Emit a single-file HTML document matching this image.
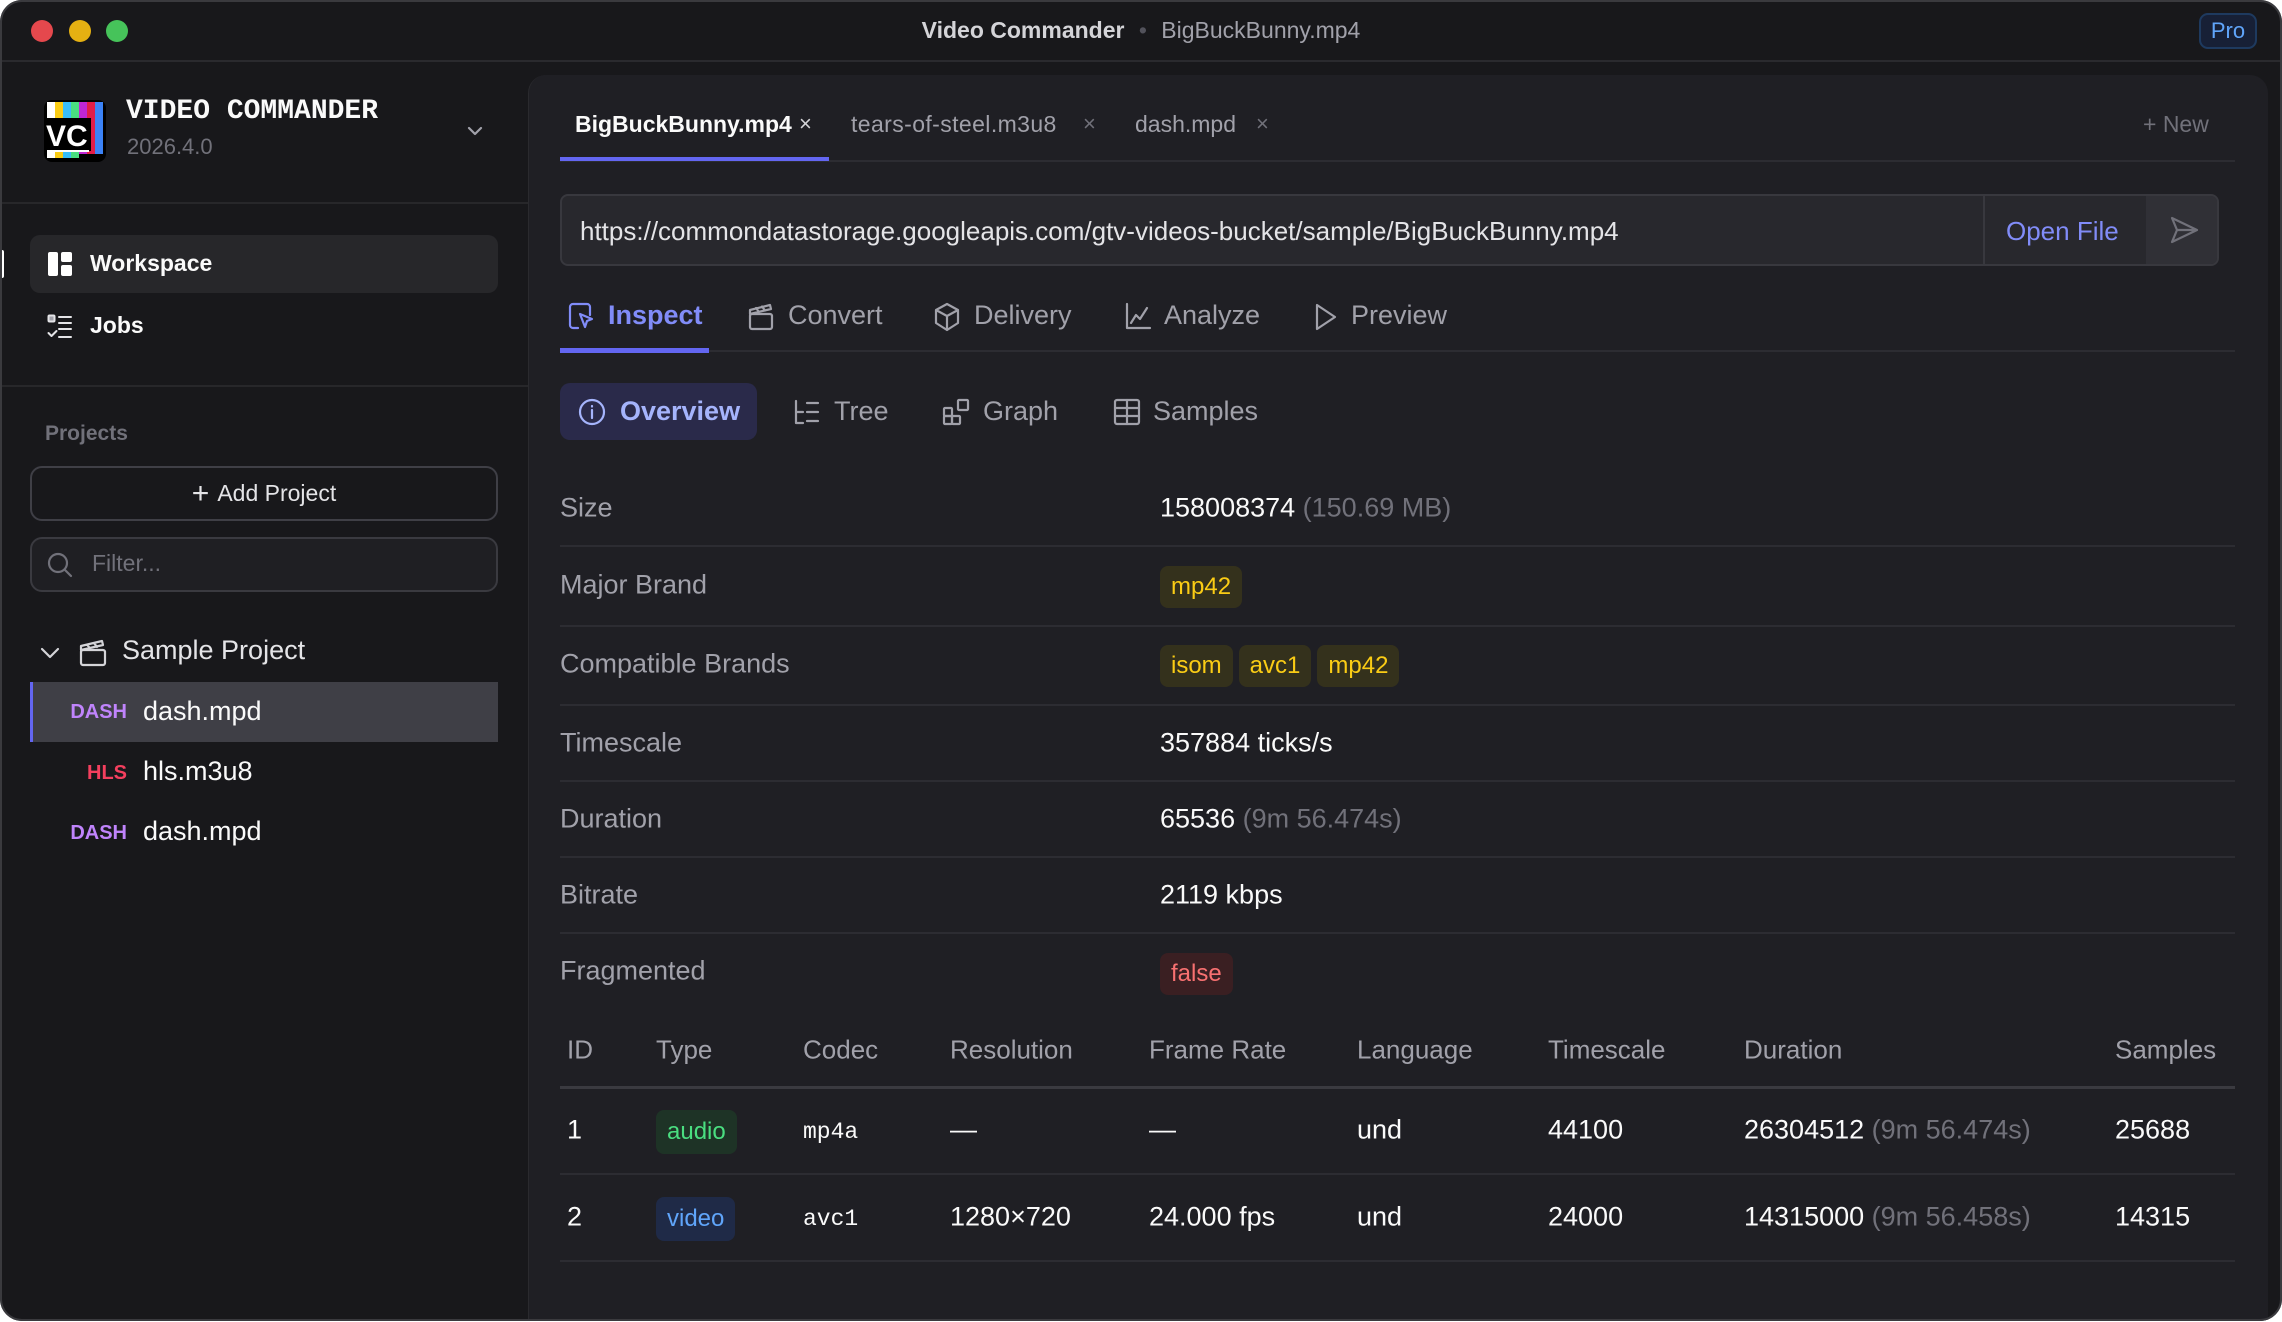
<!DOCTYPE html>
<html><head><meta charset="utf-8"><style>
*{margin:0;padding:0;box-sizing:border-box}
body{width:2282px;height:1322px;background:#fff;font-family:"Liberation Sans",sans-serif;overflow:hidden;position:relative}
.win{position:absolute;left:0;top:0;width:2282px;height:1321px;background:#18181b;border-radius:22px;overflow:hidden}
.frame{position:absolute;left:0;top:0;width:2282px;height:1321px;border:2px solid #3a3a3e;border-radius:22px;pointer-events:none}
.a{position:absolute;white-space:nowrap}
.ic{position:absolute;fill:none;stroke-linecap:round;stroke-linejoin:round}
.lbl{position:absolute;left:560px;font-size:27px;color:#a1a1aa;transform:translateY(-50%)}
.val{position:absolute;left:1160px;font-size:27px;color:#fafafa;transform:translateY(-50%)}
.dim{color:#71717a}
.hr{position:absolute;left:560px;width:1675px;height:2px;background:#2c2c32}
.bd{display:inline-block;height:42px;line-height:42px;padding:0 11px;border-radius:8px;background:#34311c;color:#facc15;font-size:24px;margin-right:6px}
.th{position:absolute;top:1050px;transform:translateY(-50%);font-size:26px;color:#a1a1aa}
.td{position:absolute;transform:translateY(-50%);font-size:27px;color:#fafafa}
.mono{font-family:"Liberation Mono",monospace;font-size:23px}
</style></head><body>
<div class="win">
<!-- title bar -->
<div class="a" style="left:0;top:60px;width:2282px;height:2px;background:#2a2a2e"></div>
<div class="a" style="left:31px;top:20px;width:22px;height:22px;border-radius:50%;background:#e5484d"></div>
<div class="a" style="left:69px;top:20px;width:22px;height:22px;border-radius:50%;background:#e5b012"></div>
<div class="a" style="left:106px;top:20px;width:22px;height:22px;border-radius:50%;background:#46c35a"></div>
<div class="a" style="left:0;width:2282px;top:17px;text-align:center;font-size:23px;color:#a1a1aa"><span style="color:#d4d4d8;font-weight:bold">Video Commander</span> <span style="color:#52525b;margin:0 8px">•</span> BigBuckBunny.mp4</div>
<div class="a" style="left:2199px;top:13px;width:58px;height:36px;border:2px solid #1e3a5f;background:#172036;border-radius:9px;color:#60a5fa;font-size:22px;text-align:center;line-height:32px">Pro</div>

<!-- sidebar -->
<div class="a" style="left:0;top:202px;width:528px;height:2px;background:#27272a"></div>
<div class="a" style="left:0;top:385px;width:528px;height:2px;background:#27272a"></div>
<svg class="a" style="left:44px;top:100px" width="62" height="62" viewBox="0 0 62 62">
<rect x="0" y="0" width="62" height="62" rx="8" fill="#000"/>
<rect x="3" y="2" width="8" height="56" fill="#fff"/><rect x="11" y="2" width="8" height="56" fill="#facc15"/><rect x="19" y="2" width="8" height="56" fill="#38bdf8"/><rect x="27" y="2" width="8" height="56" fill="#4ade80"/><rect x="35" y="2" width="8" height="52" fill="#c026d3"/><rect x="43" y="2" width="8" height="52" fill="#e11d48"/><rect x="51" y="2" width="8" height="52" fill="#3b82f6"/>
<rect x="0" y="18" width="47" height="33" fill="#000"/>
<text x="2" y="46" font-family="Liberation Sans" font-weight="bold" font-size="30" fill="#fff">VC</text>
<rect x="3" y="50" width="42" height="2" fill="#fff"/>
</svg>
<div class="a" style="left:126px;top:96px;font-family:'Liberation Mono',monospace;font-size:28px;color:#fafafa;font-weight:bold">VIDEO COMMANDER</div>
<div class="a" style="left:127px;top:134px;font-size:22px;color:#71717a">2026.4.0</div>
<svg class="ic" style="left:465px;top:124px" width="20" height="14" viewBox="0 0 20 14" stroke="#a1a1aa" stroke-width="2.2"><path d="M4 4l6 6 6-6"/></svg>

<div class="a" style="left:0;top:250px;width:4px;height:28px;background:#fff;border-radius:2px"></div>
<div class="a" style="left:30px;top:235px;width:468px;height:58px;background:#27272a;border-radius:10px"></div>
<svg class="a" style="left:47px;top:251px" width="26" height="26" viewBox="0 0 26 26"><rect x="1" y="1" width="10" height="24" rx="2" fill="#fff"/><rect x="14" y="1" width="11" height="10" rx="2" fill="#fff"/><rect x="14" y="14" width="11" height="11" rx="2" fill="#fff"/></svg>
<div class="a" style="left:90px;top:250px;font-size:23px;color:#fafafa;font-weight:bold">Workspace</div>
<svg class="ic" style="left:47px;top:314px" width="26" height="26" viewBox="0 0 26 26" stroke="#e4e4e7" stroke-width="2"><rect x="1.5" y="1.5" width="6" height="6" rx="1" fill="#a1a1aa"/><path d="M12 3h12M12 9h12M12 15h12M12 23h12M1.5 19l3 3 5-5"/></svg>
<div class="a" style="left:90px;top:312px;font-size:23px;color:#fafafa;font-weight:bold">Jobs</div>

<div class="a" style="left:45px;top:422px;font-size:21px;color:#71717a;font-weight:bold">Projects</div>
<div class="a" style="left:30px;top:466px;width:468px;height:55px;border:2px solid #3f3f46;border-radius:12px;text-align:center;line-height:51px;font-size:23px;color:#e4e4e7"><span style="font-size:30px;vertical-align:-2px;margin-right:8px">+</span>Add Project</div>
<div class="a" style="left:30px;top:537px;width:468px;height:55px;border:2px solid #3a3a40;background:#1f1f23;border-radius:12px"></div>
<svg class="ic" style="left:46px;top:551px" width="28" height="28" viewBox="0 0 28 28" stroke="#71717a" stroke-width="2.2"><circle cx="12" cy="12" r="9"/><path d="M19 19l6 6"/></svg>
<div class="a" style="left:92px;top:550px;font-size:23px;color:#71717a">Filter...</div>

<svg class="ic" style="left:38px;top:643px" width="24" height="20" viewBox="0 0 24 20" stroke="#d4d4d8" stroke-width="2.2"><path d="M4 6l8 8 8-8"/></svg>
<svg class="ic" style="left:78px;top:638px" width="30" height="30" viewBox="0 0 30 30" stroke="#d4d4d8" stroke-width="2.2"><rect x="3" y="12" width="24" height="15" rx="2"/><path d="M3 12l0-4 21-5 1 4-22 5M9 6.5l3 4M16 5l3 4"/></svg>
<div class="a" style="left:122px;top:635px;font-size:27px;color:#e4e4e7">Sample Project</div>

<div class="a" style="left:30px;top:682px;width:468px;height:60px;background:#3f3f46;border-left:3px solid #6366f1"></div>
<div class="a" style="left:0;width:127px;top:701px;text-align:right;font-size:20px;font-weight:bold;color:#c084fc">DASH</div>
<div class="a" style="left:143px;top:696px;font-size:27px;color:#fafafa">dash.mpd</div>
<div class="a" style="left:0;width:127px;top:762px;text-align:right;font-size:20px;font-weight:bold;color:#f43f5e">HLS</div>
<div class="a" style="left:143px;top:756px;font-size:27px;color:#fafafa">hls.m3u8</div>
<div class="a" style="left:0;width:127px;top:822px;text-align:right;font-size:20px;font-weight:bold;color:#c084fc">DASH</div>
<div class="a" style="left:143px;top:816px;font-size:27px;color:#fafafa">dash.mpd</div>

<!-- main panel -->
<div class="a" style="left:528px;top:75px;width:1740px;height:1300px;background:#1f1f24;border-radius:18px 18px 0 0;border-left:1px solid #2a2a2e"></div>

<div class="a" style="left:575px;top:111px;font-size:23px;color:#fafafa;font-weight:bold">BigBuckBunny.mp4</div>
<div class="a" style="left:799px;top:111px;font-size:22px;color:#d4d4d8">×</div>
<div class="a" style="left:851px;top:111px;font-size:23px;color:#a1a1aa;letter-spacing:0.4px">tears-of-steel.m3u8</div>
<div class="a" style="left:1083px;top:111px;font-size:22px;color:#71717a">×</div>
<div class="a" style="left:1135px;top:111px;font-size:23px;color:#a1a1aa">dash.mpd</div>
<div class="a" style="left:1256px;top:111px;font-size:22px;color:#71717a">×</div>
<div class="a" style="left:2143px;top:111px;font-size:23px;color:#71717a">+ New</div>
<div class="a" style="left:560px;top:160px;width:1675px;height:2px;background:#2c2c32"></div>
<div class="a" style="left:560px;top:157px;width:269px;height:4px;background:#6366f1"></div>

<div class="a" style="left:560px;top:194px;width:1659px;height:72px;border:2px solid #38383e;background:#28282d;border-radius:8px;overflow:hidden">
 <div class="a" style="left:18px;top:20px;font-size:26px;color:#e4e4e7">https://commondatastorage.googleapis.com/gtv-videos-bucket/sample/BigBuckBunny.mp4</div>
 <div class="a" style="left:1421px;top:0;width:2px;height:72px;background:#38383e"></div>
 <div class="a" style="left:1444px;top:20px;font-size:26px;color:#818cf8">Open File</div>
 <div class="a" style="left:1584px;top:0;width:80px;height:72px;background:#303036"></div>
 <svg class="ic" style="left:1606px;top:18px" width="32" height="32" viewBox="0 0 32 32" stroke="#71717a" stroke-width="2.2"><path d="M4 4l25 12-25 12 5-12z M9 16h20"/></svg>
</div>

<!-- inspect tabs -->
<svg class="ic" style="left:568px;top:302px" width="28" height="30" viewBox="0 0 28 30" stroke="#818cf8" stroke-width="2.2"><path d="M10 26H5a3 3 0 0 1-3-3V5a3 3 0 0 1 3-3h14a3 3 0 0 1 3 3v8"/><path d="M12 12l12 5-5 2-2 6z"/></svg>
<div class="a" style="left:608px;top:300px;font-size:27px;color:#818cf8;font-weight:bold">Inspect</div>
<svg class="ic" style="left:747px;top:302px" width="28" height="30" viewBox="0 0 28 30" stroke="#a1a1aa" stroke-width="2.2"><rect x="3" y="12" width="22" height="15" rx="2"/><path d="M3 12V8l20-5 1 4-21 5M9 6l3 4M15 4.5l3 4"/></svg>
<div class="a" style="left:788px;top:300px;font-size:27px;color:#a1a1aa">Convert</div>
<svg class="ic" style="left:933px;top:302px" width="28" height="30" viewBox="0 0 28 30" stroke="#a1a1aa" stroke-width="2.2"><path d="M14 2l11 6v13l-11 7-11-7V8z M3 8l11 6 11-6 M14 14v14"/></svg>
<div class="a" style="left:974px;top:300px;font-size:27px;color:#a1a1aa">Delivery</div>
<svg class="ic" style="left:1124px;top:302px" width="28" height="30" viewBox="0 0 28 30" stroke="#a1a1aa" stroke-width="2.2"><path d="M3 2v24h23 M7 21l5-8 4 4 7-11"/></svg>
<div class="a" style="left:1164px;top:300px;font-size:27px;color:#a1a1aa">Analyze</div>
<svg class="ic" style="left:1313px;top:302px" width="26" height="30" viewBox="0 0 26 30" stroke="#a1a1aa" stroke-width="2.2"><path d="M4 3l18 12-18 12z"/></svg>
<div class="a" style="left:1351px;top:300px;font-size:27px;color:#a1a1aa">Preview</div>
<div class="a" style="left:560px;top:350px;width:1675px;height:2px;background:#2c2c32"></div>
<div class="a" style="left:560px;top:348px;width:149px;height:5px;background:#6366f1"></div>

<!-- sub tabs -->
<div class="a" style="left:560px;top:383px;width:197px;height:57px;background:#2a2a4a;border-radius:10px"></div>
<svg class="ic" style="left:578px;top:398px" width="28" height="28" viewBox="0 0 28 28" stroke="#a5b4fc" stroke-width="2.2"><circle cx="14" cy="14" r="12"/><path d="M14 12v8M14 8v.5"/></svg>
<div class="a" style="left:620px;top:396px;font-size:27px;color:#a5b4fc;font-weight:bold">Overview</div>
<svg class="ic" style="left:792px;top:398px" width="28" height="28" viewBox="0 0 28 28" stroke="#a1a1aa" stroke-width="2.2"><path d="M4 3v22h7 M4 14h7 M15 5h11 M15 14h11 M15 23h11"/></svg>
<div class="a" style="left:834px;top:396px;font-size:27px;color:#a1a1aa">Tree</div>
<svg class="ic" style="left:942px;top:398px" width="28" height="28" viewBox="0 0 28 28" stroke="#a1a1aa" stroke-width="2.2"><rect x="2" y="10" width="8" height="8" rx="1"/><rect x="2" y="18" width="8" height="8" rx="1"/><rect x="10" y="18" width="8" height="8" rx="1"/><rect x="16" y="2" width="10" height="10" rx="1"/></svg>
<div class="a" style="left:983px;top:396px;font-size:27px;color:#a1a1aa">Graph</div>
<svg class="ic" style="left:1113px;top:398px" width="28" height="28" viewBox="0 0 28 28" stroke="#a1a1aa" stroke-width="2.2"><rect x="2" y="2" width="24" height="24" rx="2"/><path d="M2 10h24M2 18h24M14 2v24"/></svg>
<div class="a" style="left:1153px;top:396px;font-size:27px;color:#a1a1aa">Samples</div>

<!-- properties -->
<div class="lbl" style="top:508px">Size</div><div class="val" style="top:508px">158008374 <span class="dim">(150.69 MB)</span></div>
<div class="hr" style="top:545px"></div>
<div class="lbl" style="top:585px">Major Brand</div><div class="val" style="top:587px"><span class="bd">mp42</span></div>
<div class="hr" style="top:625px"></div>
<div class="lbl" style="top:664px">Compatible Brands</div><div class="val" style="top:666px"><span class="bd">isom</span><span class="bd">avc1</span><span class="bd">mp42</span></div>
<div class="hr" style="top:704px"></div>
<div class="lbl" style="top:743px">Timescale</div><div class="val" style="top:743px">357884 ticks/s</div>
<div class="hr" style="top:780px"></div>
<div class="lbl" style="top:819px">Duration</div><div class="val" style="top:819px">65536 <span class="dim">(9m 56.474s)</span></div>
<div class="hr" style="top:856px"></div>
<div class="lbl" style="top:895px">Bitrate</div><div class="val" style="top:895px">2119 kbps</div>
<div class="hr" style="top:932px"></div>
<div class="lbl" style="top:971px">Fragmented</div><div class="val" style="top:974px"><span class="bd" style="background:#3a1f22;color:#f87171">false</span></div>

<!-- table -->
<div class="th" style="left:567px">ID</div><div class="th" style="left:656px">Type</div><div class="th" style="left:803px">Codec</div><div class="th" style="left:950px">Resolution</div><div class="th" style="left:1149px">Frame Rate</div><div class="th" style="left:1357px">Language</div><div class="th" style="left:1548px">Timescale</div><div class="th" style="left:1744px">Duration</div><div class="th" style="left:2115px">Samples</div>
<div class="a" style="left:560px;top:1086px;width:1675px;height:3px;background:#3a3a40"></div>

<div class="td" style="left:567px;top:1130px">1</div>
<div class="td" style="left:656px;top:1132px"><span class="bd" style="background:#1e3326;color:#4ade80;height:44px;line-height:44px">audio</span></div>
<div class="td mono" style="left:803px;top:1132px">mp4a</div>
<div class="td" style="left:950px;top:1130px">—</div><div class="td" style="left:1149px;top:1130px">—</div>
<div class="td" style="left:1357px;top:1130px">und</div><div class="td" style="left:1548px;top:1130px">44100</div>
<div class="td" style="left:1744px;top:1130px">26304512 <span class="dim">(9m 56.474s)</span></div><div class="td" style="left:2115px;top:1130px">25688</div>
<div class="a" style="left:560px;top:1173px;width:1675px;height:2px;background:#2c2c32"></div>

<div class="td" style="left:567px;top:1217px">2</div>
<div class="td" style="left:656px;top:1219px"><span class="bd" style="background:#1f2a47;color:#60a5fa;height:44px;line-height:44px">video</span></div>
<div class="td mono" style="left:803px;top:1219px">avc1</div>
<div class="td" style="left:950px;top:1217px">1280×720</div><div class="td" style="left:1149px;top:1217px">24.000 fps</div>
<div class="td" style="left:1357px;top:1217px">und</div><div class="td" style="left:1548px;top:1217px">24000</div>
<div class="td" style="left:1744px;top:1217px">14315000 <span class="dim">(9m 56.458s)</span></div><div class="td" style="left:2115px;top:1217px">14315</div>
<div class="a" style="left:560px;top:1260px;width:1675px;height:2px;background:#2c2c32"></div>
</div>
<div class="frame"></div>
</body></html>
